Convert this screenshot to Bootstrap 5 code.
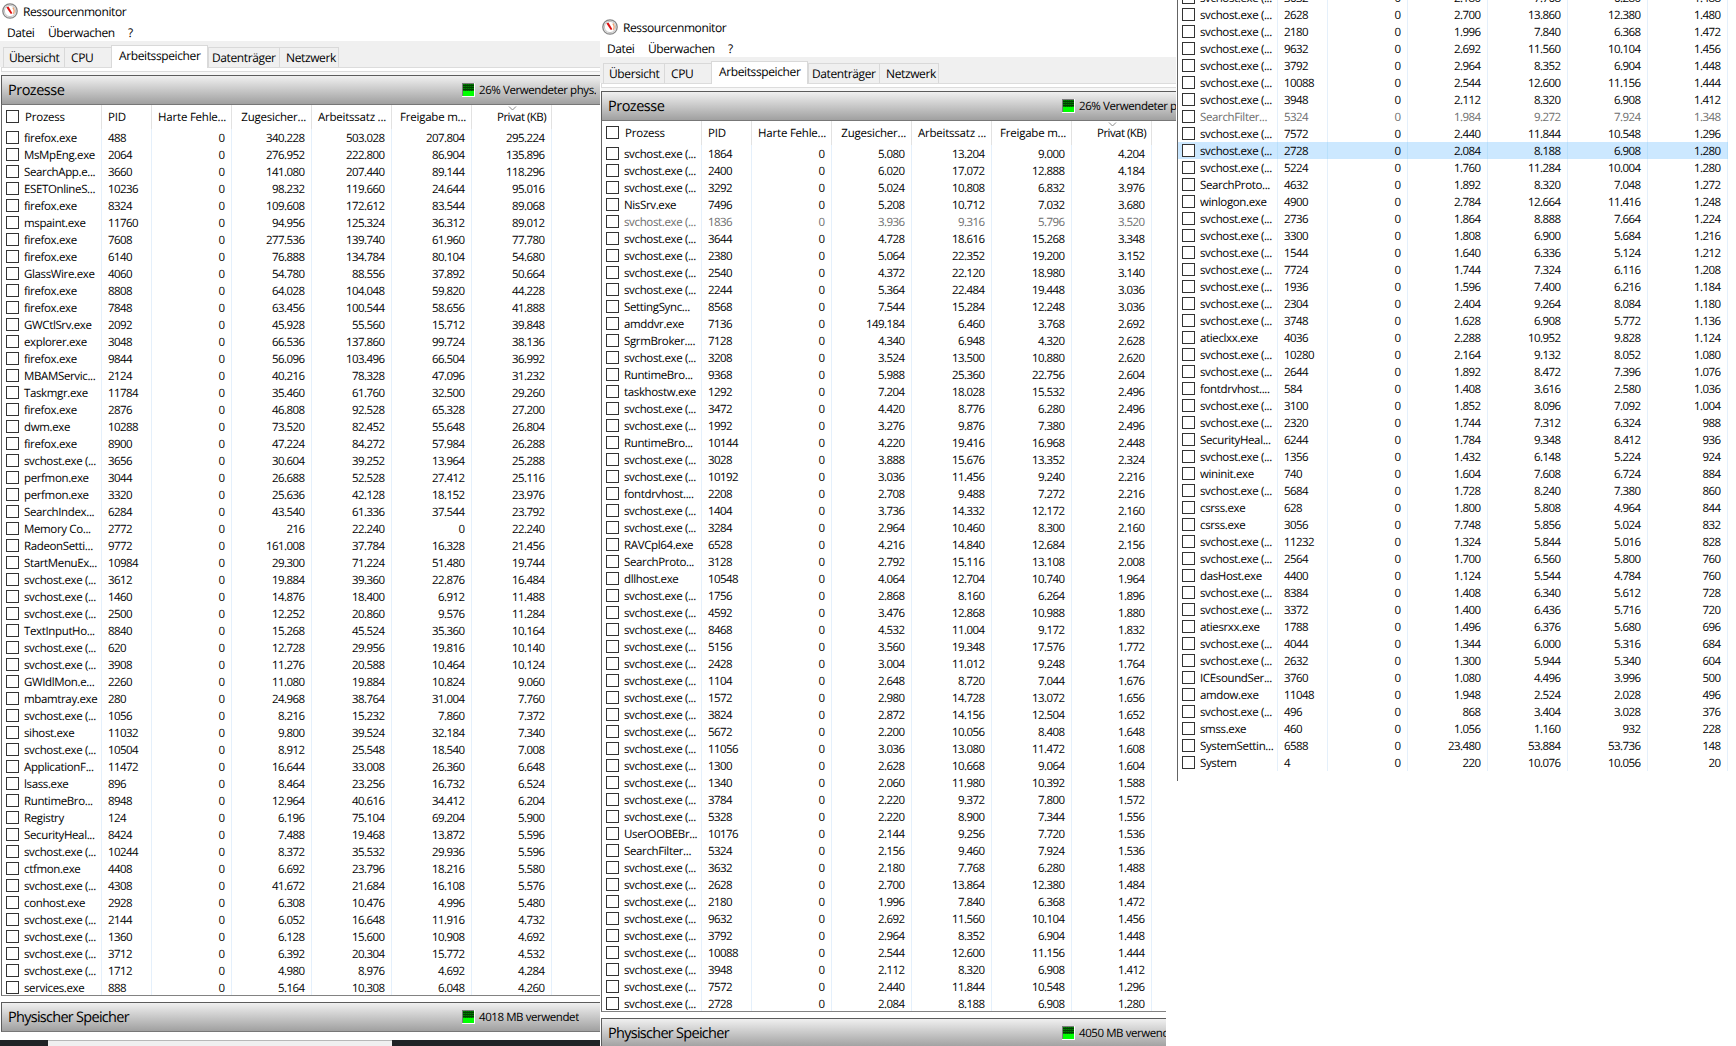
<!DOCTYPE html>
<html lang="de">
<head>
<meta charset="utf-8">
<title>Ressourcenmonitor</title>
<link rel="stylesheet" href="https://cdn.jsdelivr.net/npm/bootstrap@5.3.0/dist/css/bootstrap.min.css">
<style>
body{width:1736px;height:1046px;overflow:hidden;background:#fff;color:#000;font-family:"Open Sans","Noto Sans",sans-serif;font-size:11.5px;line-height:17px;letter-spacing:-.4px;text-rendering:geometricPrecision}
.pane{height:1046px;overflow:hidden;white-space:nowrap}
.pane-a{width:600px}
.pane-b{width:576px;padding-top:16px}
.pane-c{width:552px;height:781px}
.titlebar{height:24px;padding:0 0 2px 2px;gap:5px;font-size:12px;letter-spacing:-.4px}
.menubar{height:17px;padding-left:7px;font-size:12px;letter-spacing:-.42px}
.w1{width:41px}
.w2{width:80px}
.tabstrip{height:26px;background:#f0f0f0;padding-left:3px;font-size:12px;letter-spacing:-.38px}
.tabitem{height:20px;border:1px solid #d9d9d9;border-bottom:0;border-right:0;background:#f0f0f0;line-height:20px;padding-left:5px;width:61px}
.tabitem.last{border-right:1px solid #d9d9d9}
.tabitem.current{height:23px;background:#fff;border-right:1px solid #d9d9d9;margin-bottom:-1px;z-index:1;position:relative}
.t2{width:47px;padding-left:6px}
.t3{width:97px;padding-left:7px}
.t4{width:71px;padding-left:3px}
.t5{width:60px;padding-left:6px}
.tabpage{height:5px;border:1px solid #dcdcdc;border-right:0;margin-left:1px;background:#fff}
.seam{height:3px;background:#f7f7f7;margin-left:1px}
.groupbar{height:30px;margin-left:1px;border:1px solid #5c5c5c;border-right:0;border-bottom-color:#777;background:linear-gradient(#f0f0f0,#a0a0a0);padding-left:6px}
.groupbar .heading{font-size:14.5px;width:454px;letter-spacing:-.72px}
.groupbar .heading.short{letter-spacing:-.5px}
.groupbar .info{font-size:11.5px;letter-spacing:-.42px;padding-left:4px}
.listing{margin-left:1px;border-left:1px solid #646464;overflow:hidden}
.pane-a .listing,.pane-b .listing{height:891px;border-bottom:1px solid #828282}
.rowline{height:17px;line-height:19px}
.c{flex:none;border-right:1px solid #e5f0fb;width:80px;text-align:right;padding-right:6.5px;letter-spacing:-.56px}
.c.n{width:100px;text-align:left;padding:0 0 0 4px;letter-spacing:-.36px}
.c.p{width:50px;text-align:left;padding:0 0 0 6px}
.box{width:13px;height:13px;border:1px solid #333;background:#fff;flex:none;margin:2px 5px 0 0}
.headline{height:24px;line-height:26px}
.headline .c{border-color:#e2e2e2;letter-spacing:-.22px;position:relative;padding-right:5px}
.headline .c:last-child{letter-spacing:-.55px}
.headline .box{margin-top:5px;margin-right:6px}
.off{color:#6d6d6d}
.picked{background:#cce8ff}
.picked .c{border-color:#b8e0fc}
.sortmark{position:absolute;left:36px;top:1px}
.clipped{margin-right:10px}
.below{height:8px}
.split{height:6px}
.taskbar{height:6px;background:#202326}
.taskbar div{margin-left:48px;width:344px;background:#f0f0f0;border-top:1px solid #b8b8b8}
.lift{margin-top:-11px}
</style>
<script src="https://cdn.jsdelivr.net/npm/bootstrap@5.3.0/dist/js/bootstrap.bundle.min.js"></script>
</head>
<body>
<svg width="0" height="0" class="position-absolute">
<symbol id="gauge" viewBox="0 0 16 16"><circle cx="8" cy="8" r="7.2" fill="#eee" stroke="#858585" stroke-width="1.3"/><circle cx="8" cy="8" r="5.600" fill="#fff" stroke="#c4c4c4" stroke-width="1"/><path d="M4.400 4.400L6.400 3.600l4 6.600-1.600.8z" fill="#dd1212"/><path d="M10.800 4.500q2.400 3 .6 6.200" fill="none" stroke="#eda070" stroke-width="1.300"/></symbol>
<symbol id="meter" viewBox="0 0 13 14"><path d="M0 0h13v14H0z" fill="#fff"/><path d="M0 0h12v13H0z" fill="#7a7a7a"/><path d="M1 1h11v8H1z" fill="#008000"/><path d="M1 2.500h11M1 4.500h11M1 6.500h11" stroke="#003c00"/><path d="M3.500 1v7M5.500 1v7M7.500 1v7M9.500 1v7" stroke="#004c00" opacity=".6"/><path d="M1 8h11v5H1z" fill="#0f0"/></symbol>
</svg>
<main class="d-flex align-items-start">
<section class="pane pane-a" id="a"></section>
<section class="pane pane-b" id="b"></section>
<section class="pane pane-c" id="c"></section>
</main>
<script>
// One process per line: name|PID|commit|working set|shareable|private; "s" abbreviates the service host.
const first=`firefox.exe|488|340.228|503.028|207.804|295.224
MsMpEng.exe|2064|276.952|222.800|86.904|135.896
SearchApp.e...|3660|141.080|207.440|89.144|118.296
ESETOnlineS...|10236|98.232|119.660|24.644|95.016
firefox.exe|8324|109.608|172.612|83.544|89.068
mspaint.exe|11760|94.956|125.324|36.312|89.012
firefox.exe|7608|277.536|139.740|61.960|77.780
firefox.exe|6140|76.888|134.784|80.104|54.680
GlassWire.exe|4060|54.780|88.556|37.892|50.664
firefox.exe|8808|64.028|104.048|59.820|44.228
firefox.exe|7848|63.456|100.544|58.656|41.888
GWCtlSrv.exe|2092|45.928|55.560|15.712|39.848
explorer.exe|3048|66.536|137.860|99.724|38.136
firefox.exe|9844|56.096|103.496|66.504|36.992
MBAMServic...|2124|40.216|78.328|47.096|31.232
Taskmgr.exe|11784|35.460|61.760|32.500|29.260
firefox.exe|2876|46.808|92.528|65.328|27.200
dwm.exe|10288|73.520|82.452|55.648|26.804
firefox.exe|8900|47.224|84.272|57.984|26.288
s|3656|30.604|39.252|13.964|25.288
perfmon.exe|3044|26.688|52.528|27.412|25.116
perfmon.exe|3320|25.636|42.128|18.152|23.976
SearchIndex...|6284|43.540|61.336|37.544|23.792
Memory Co...|2772|216|22.240|0|22.240
RadeonSetti...|9772|161.008|37.784|16.328|21.456
StartMenuEx...|10984|29.300|71.224|51.480|19.744
s|3612|19.884|39.360|22.876|16.484
s|1460|14.876|18.400|6.912|11.488
s|2500|12.252|20.860|9.576|11.284
TextInputHo...|8840|15.268|45.524|35.360|10.164
s|620|12.728|29.956|19.816|10.140
s|3908|11.276|20.588|10.464|10.124
GWIdlMon.e...|2260|11.080|19.884|10.824|9.060
mbamtray.exe|280|24.968|38.764|31.004|7.760
s|1056|8.216|15.232|7.860|7.372
sihost.exe|11032|9.800|39.524|32.184|7.340
s|10504|8.912|25.548|18.540|7.008
ApplicationF...|11472|16.644|33.008|26.360|6.648
lsass.exe|896|8.464|23.256|16.732|6.524
RuntimeBro...|8948|12.964|40.616|34.412|6.204
Registry|124|6.196|75.104|69.204|5.900
SecurityHeal...|8424|7.488|19.468|13.872|5.596
s|10244|8.372|35.532|29.936|5.596
ctfmon.exe|4408|6.692|23.796|18.216|5.580
s|4308|41.672|21.684|16.108|5.576
conhost.exe|2928|6.308|10.476|4.996|5.480
s|2144|6.052|16.648|11.916|4.732
s|1360|6.128|15.600|10.908|4.692
s|3712|6.392|20.304|15.772|4.532
s|1712|4.980|8.976|4.692|4.284
services.exe|888|5.164|10.308|6.048|4.260`;
const second=`s|1864|5.080|13.204|9.000|4.204
s|2400|6.020|17.072|12.888|4.184
s|3292|5.024|10.808|6.832|3.976
NisSrv.exe|7496|5.208|10.712|7.032|3.680
s|1836|3.936|9.316|5.796|3.520|off
s|3644|4.728|18.616|15.268|3.348
s|2380|5.064|22.352|19.200|3.152
s|2540|4.372|22.120|18.980|3.140
s|2244|5.364|22.484|19.448|3.036
SettingSync...|8568|7.544|15.284|12.248|3.036
amddvr.exe|7136|149.184|6.460|3.768|2.692
SgrmBroker....|7128|4.340|6.948|4.320|2.628
s|3208|3.524|13.500|10.880|2.620
RuntimeBro...|9368|5.988|25.360|22.756|2.604
taskhostw.exe|1292|7.204|18.028|15.532|2.496
s|3472|4.420|8.776|6.280|2.496
s|1992|3.276|9.876|7.380|2.496
RuntimeBro...|10144|4.220|19.416|16.968|2.448
s|3028|3.888|15.676|13.352|2.324
s|10192|3.036|11.456|9.240|2.216
fontdrvhost....|2208|2.708|9.488|7.272|2.216
s|1404|3.736|14.332|12.172|2.160
s|3284|2.964|10.460|8.300|2.160
RAVCpl64.exe|6528|4.216|14.840|12.684|2.156
SearchProto...|3128|2.792|15.116|13.108|2.008
dllhost.exe|10548|4.064|12.704|10.740|1.964
s|1756|2.868|8.160|6.264|1.896
s|4592|3.476|12.868|10.988|1.880
s|8468|4.532|11.004|9.172|1.832
s|5156|3.560|19.348|17.576|1.772
s|2428|3.004|11.012|9.248|1.764
s|1104|2.648|8.720|7.044|1.676
s|1572|2.980|14.728|13.072|1.656
s|3824|2.872|14.156|12.504|1.652
s|5672|2.200|10.056|8.408|1.648
s|11056|3.036|13.080|11.472|1.608
s|1300|2.628|10.668|9.064|1.604
s|1340|2.060|11.980|10.392|1.588
s|3784|2.220|9.372|7.800|1.572
s|5328|2.220|8.900|7.344|1.556
UserOOBEBr...|10176|2.144|9.256|7.720|1.536
SearchFilter...|5324|2.156|9.460|7.924|1.536
s|3632|2.180|7.768|6.280|1.488
s|2628|2.700|13.864|12.380|1.484
s|2180|1.996|7.840|6.368|1.472
s|9632|2.692|11.560|10.104|1.456
s|3792|2.964|8.352|6.904|1.448
s|10088|2.544|12.600|11.156|1.444
s|3948|2.112|8.320|6.908|1.412
s|7572|2.440|11.844|10.548|1.296
s|2728|2.084|8.188|6.908|1.280`;
const third=`s|3632|2.180|7.768|6.280|1.488
s|2628|2.700|13.860|12.380|1.480
s|2180|1.996|7.840|6.368|1.472
s|9632|2.692|11.560|10.104|1.456
s|3792|2.964|8.352|6.904|1.448
s|10088|2.544|12.600|11.156|1.444
s|3948|2.112|8.320|6.908|1.412
SearchFilter...|5324|1.984|9.272|7.924|1.348|off
s|7572|2.440|11.844|10.548|1.296
s|2728|2.084|8.188|6.908|1.280|picked
s|5224|1.760|11.284|10.004|1.280
SearchProto...|4632|1.892|8.320|7.048|1.272
winlogon.exe|4900|2.784|12.664|11.416|1.248
s|2736|1.864|8.888|7.664|1.224
s|3300|1.808|6.900|5.684|1.216
s|1544|1.640|6.336|5.124|1.212
s|7724|1.744|7.324|6.116|1.208
s|1936|1.596|7.400|6.216|1.184
s|2304|2.404|9.264|8.084|1.180
s|3748|1.628|6.908|5.772|1.136
atieclxx.exe|4036|2.288|10.952|9.828|1.124
s|10280|2.164|9.132|8.052|1.080
s|2644|1.892|8.472|7.396|1.076
fontdrvhost....|584|1.408|3.616|2.580|1.036
s|3100|1.852|8.096|7.092|1.004
s|2320|1.744|7.312|6.324|988
SecurityHeal...|6244|1.784|9.348|8.412|936
s|1356|1.432|6.148|5.224|924
wininit.exe|740|1.604|7.608|6.724|884
s|5684|1.728|8.240|7.380|860
csrss.exe|628|1.800|5.808|4.964|844
csrss.exe|3056|7.748|5.856|5.024|832
s|11232|1.324|5.844|5.016|828
s|2564|1.700|6.560|5.800|760
dasHost.exe|4400|1.124|5.544|4.784|760
s|8384|1.408|6.340|5.612|728
s|3372|1.400|6.436|5.716|720
atiesrxx.exe|1788|1.496|6.376|5.680|696
s|4044|1.344|6.000|5.316|684
s|2632|1.300|5.944|5.340|604
ICEsoundSer...|3760|1.080|4.496|3.996|500
amdow.exe|11048|1.948|2.524|2.028|496
s|496|868|3.404|3.028|376
smss.exe|460|1.056|1.160|932|228
SystemSettin...|6588|23.480|53.884|53.736|148
System|4|220|10.076|10.056|20`;
const line=(n,p,v,cls='')=>`<div class="rowline d-flex ${cls}"><div class="c n d-flex"><i class="box"></i><span>${n}</span></div><div class="c p">${p}</div>${v.map(x=>`<div class="c">${x}</div>`).join('')}</div>`;
const rows=t=>t.split('\n').map(l=>{const f=l.split('|');return line(f[0]==='s'?'svchost.exe (...':f[0],f[1],['0',...f.slice(2,6)],f[6]||'')}).join('');
const bar=(h,i,cls='')=>`<div class="groupbar d-flex align-items-center ${cls}"><div class="heading flex-shrink-0 ${h.length<10?'short':''}">${h}</div><svg width="13" height="14" class="flex-shrink-0"><use href="#meter"/></svg><span class="info overflow-hidden">${i}</span></div>`;
const chrome=`<div class="titlebar d-flex align-items-center"><svg width="16" height="16"><use href="#gauge"/></svg><span>Ressourcenmonitor</span></div>
<div class="menubar d-flex"><span class="w1">Datei</span><span class="w2">Überwachen</span><span>?</span></div>
<div class="tabstrip d-flex align-items-end"><div class="tabitem">Übersicht</div><div class="tabitem t2">CPU</div><div class="tabitem current t3">Arbeitsspeicher</div><div class="tabitem t4">Datenträger</div><div class="tabitem last t5">Netzwerk</div></div><div class="tabpage"></div><div class="seam"></div>`;
const head=line('Prozess','PID',['Harte Fehle...','Zugesicher...','Arbeitssatz ...','Freigabe m...','Privat (KB)<svg class="sortmark" width="9" height="5"><path d="M1 .5l3.5 3.5L8 .5" fill="none" stroke="#8a8a8a"/></svg>'],'headline');
const split='<div class="split"></div>';
a.innerHTML=chrome+bar('Prozesse','26% Verwendeter phys.')+`<div class="listing">${head+rows(first)}</div>`+split+bar('Physischer Speicher','4018 MB verwendet')+'<div class="below"></div><div class="taskbar d-flex"><div></div></div>';
b.innerHTML=chrome+bar('Prozesse','26% Verwendeter p')+`<div class="listing clipped">${head+rows(second)}</div>`+split+bar('Physischer Speicher','4050 MB verwend','clipped');
c.innerHTML=`<div class="listing h-100"><div class="lift">${rows(third)}</div></div>`;
</script>
</body>
</html>
